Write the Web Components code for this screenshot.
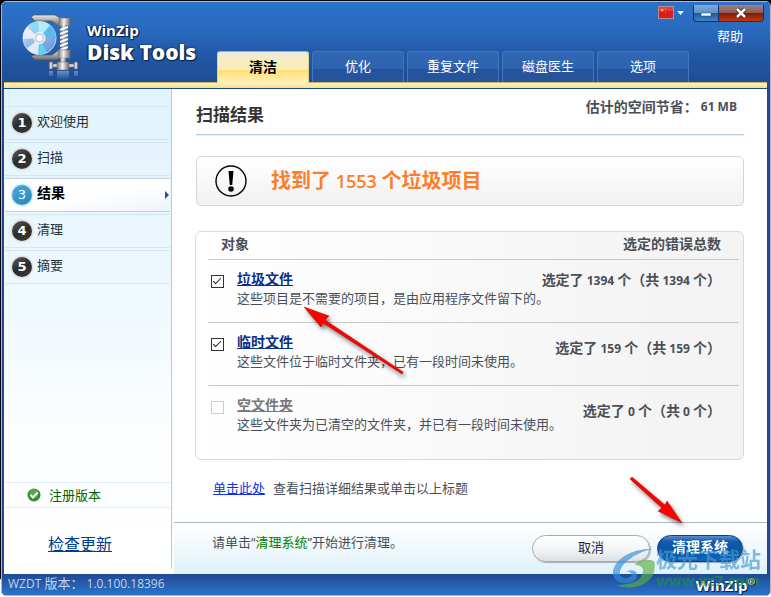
<!DOCTYPE html>
<html lang="zh-CN">
<head>
<meta charset="utf-8">
<title>WinZip Disk Tools</title>
<style>
  html { background: linear-gradient(#000 97%, #fff 97%); }
  body {
    margin: 0;
    min-height: 100vh;
    display: flex;
    overflow: hidden;
    font: 13px/18px "Open Sans", "Noto Sans CJK SC", sans-serif;
    color: #4a4f57;
    --wz-edge: #1f4a93;
    --wz-line: #d3e6f2;
  }
  wz-notice small { font-size: 18px; }
</style>
</head>
<body>

<wz-window>
  <wz-header slot="header">
    <wz-tab active>清洁</wz-tab>
    <wz-tab>优化</wz-tab>
    <wz-tab>重复文件</wz-tab>
    <wz-tab>磁盘医生</wz-tab>
    <wz-tab>选项</wz-tab>
  </wz-header>

  <wz-sidebar slot="sidebar">
    <wz-step number="1">欢迎使用</wz-step>
    <wz-step number="2">扫描</wz-step>
    <wz-step number="3" active>结果</wz-step>
    <wz-step number="4">清理</wz-step>
    <wz-step number="5">摘要</wz-step>
  </wz-sidebar>

  <wz-page>
    <span slot="title">扫描结果</span>
    <span slot="saving">估计的空间节省：</span>
    <span slot="amount">61 MB</span>
    <wz-notice>找到了<small> 1553 </small>个垃圾项目</wz-notice>
    <wz-results></wz-results>
    <wz-hint></wz-hint>
  </wz-page>

  <wz-actions slot="actions"></wz-actions>
  <wz-status slot="status" version="1.0.100.18396"></wz-status>
</wz-window>
<wz-arrows></wz-arrows>
<wz-watermark></wz-watermark>

<script>
class WzWindow extends HTMLElement {
  connectedCallback() {
    this.attachShadow({ mode: "open" });
    this.shadowRoot.innerHTML = `
      <style>
        :host {
          flex: 1;
          display: flex;
          flex-direction: column;
          margin: 1px 0 1px 1px;
          border: 1px solid #9fb9df;
          border-radius: 5px;
          overflow: hidden;
          background: var(--wz-edge);
        }
        .body {
          flex: 1;
          display: grid;
          grid-template-columns: 168px 1fr;
          margin: 0 3px 0 2px;
          background: #fff;
        }
        .content {
          display: flex;
          flex-direction: column;
          min-width: 0;
        }
        main { flex: 1; }
      </style>
      <slot name="header"></slot>
      <div class="body">
        <slot name="sidebar"></slot>
        <div class="content">
          <main><slot></slot></main>
          <slot name="actions"></slot>
        </div>
      </div>
      <slot name="status"></slot>
    `;
  }
}

class WzLogo extends HTMLElement {
  connectedCallback() {
    this.attachShadow({ mode: "open" });
    this.shadowRoot.innerHTML = `
      <style>
        :host { display: block; width: 62px; height: 70px; }
        svg { display: block; }
      </style>
      <svg width="62" height="70" viewBox="20 12 62 70" aria-hidden="true">
        <defs>
          <linearGradient id="steel" x1="0" x2="1">
            <stop offset="0" stop-color="#777"/><stop offset=".45" stop-color="#f4f4f4"/><stop offset="1" stop-color="#6d6d6d"/>
          </linearGradient>
          <linearGradient id="jaw" x1="0" x2="0" y1="0" y2="1">
            <stop offset="0" stop-color="#e9e9e9"/><stop offset=".5" stop-color="#aaa"/><stop offset="1" stop-color="#666"/>
          </linearGradient>
          <linearGradient id="disc" x1="0" x2="1" y1="0" y2="1">
            <stop offset="0" stop-color="#cfdcf6"/><stop offset=".5" stop-color="#8fb7ee"/><stop offset="1" stop-color="#5a8fd8"/>
          </linearGradient>
          <linearGradient id="fade" x1="0" x2="0" y1="0" y2="1">
            <stop offset="0" stop-color="#dbe7fa" stop-opacity=".4"/><stop offset="1" stop-color="#dbe7fa" stop-opacity="0"/>
          </linearGradient>
        </defs>
        <path d="M31 17l3-2h21l5 3h10v8H58l-6-5H35z" fill="url(#jaw)" stroke="#555" stroke-width=".7"/>
        <path d="M31 56l4 4h21l4-2h10v-8H59l-7 5H35z" fill="url(#jaw)" stroke="#555" stroke-width=".7"/>
        <rect x="59" y="18" width="11" height="8" fill="url(#steel)" stroke="#777" stroke-width=".6"/>
        <rect x="61" y="25" width="6" height="26" fill="url(#steel)"/>
        <path d="M60 30l8-3M60 34l8-3M60 38l8-3M60 42l8-3M60 46l8-3M60 50l8-3" stroke="#fafafa" stroke-width="2"/>
        <path d="M60 32l8-3M60 36l8-3M60 40l8-3M60 44l8-3M60 48l8-3" stroke="#777" stroke-width=".8"/>
        <rect x="58" y="50" width="12" height="8" fill="url(#steel)" stroke="#777" stroke-width=".6"/>
        <rect x="60" y="58" width="6" height="5" fill="url(#steel)"/>
        <rect x="52" y="64" width="23" height="3" fill="#d9d9d9" stroke="#777" stroke-width=".5"/>
        <rect x="57" y="62" width="12" height="8" rx="1" fill="url(#steel)" stroke="#666" stroke-width=".5"/>
        <rect x="49" y="62" width="4" height="7" rx="1" fill="url(#steel)" stroke="#666" stroke-width=".5"/>
        <rect x="74" y="62" width="4" height="7" rx="1" fill="url(#steel)" stroke="#666" stroke-width=".5"/>
        <path d="M49 71h4v5h-4zM57 71h12v9H57zM74 71h4v5h-4z" fill="url(#fade)"/>
        <circle cx="39.500" cy="38" r="16.500" fill="url(#disc)" stroke="#e4edfb" stroke-width=".8"/>
        <path d="M39.500 38L30 24.500A16.500 16.500 0 0 1 38 21.500z" fill="#7fe0f5"/>
        <path d="M39.500 38L38 21.500A16.500 16.500 0 0 1 50 25.500z" fill="#b7eaf8"/>
        <path d="M39.500 38L50 25.500A16.500 16.500 0 0 1 56 38z" fill="#5fb8ea"/>
        <path d="M39.500 38L47 52.500A16.500 16.500 0 0 1 38 54.500z" fill="#63d0ee"/>
        <path d="M39.500 38L38 54.500A16.500 16.500 0 0 1 27 48.500z" fill="#e3eafb"/>
        <path d="M39.500 38L23 39A16.500 16.500 0 0 1 27 27z" fill="#e9eefc"/>
        <circle cx="39.500" cy="38" r="5.500" fill="#c9d1e2" stroke="#fff" stroke-width="1"/>
        <circle cx="39.500" cy="38" r="3" fill="#fff"/>
      </svg>
    `;
  }
}

class WzHeader extends HTMLElement {
  connectedCallback() {
    this.attachShadow({ mode: "open" });
    this.shadowRoot.innerHTML = `
      <style>
        :host {
          display: grid;
          grid-template-columns: 215px 1fr;
          background: linear-gradient(#2b72c9, #2a6bc0 30%, #2157a4 62%, #1e4a92);
        }
        .brand {
          display: flex;
          gap: 5px;
          padding: 10px 0 0 18px;
          color: #fff;
          font-weight: 700;
          text-shadow: 0 0 2px #0b1f45, 1px 1px 1px #0b1f45, -1px 0 1px #0b1f45;
        }
        .name { padding-top: 8px; white-space: nowrap; }
        .name small { display: block; font-size: 15px; line-height: 20px; }
        .name strong { display: block; font-size: 21px; line-height: 24px; }
        .side { display: flex; flex-direction: column; }
        .controls {
          display: flex;
          justify-content: flex-end;
          padding: 3px 6px 0 0;
        }
        button {
          display: block;
          padding: 0;
          border: 0;
          background: none;
          height: 17px;
        }
        svg { display: block; }
        .lang {
          display: flex;
          gap: 3px;
          padding-top: 1px;
          margin-right: 9px;
        }
        .min, .close {
          border: 1px solid #16305f;
          border-top-width: 0;
          box-sizing: border-box;
        }
        .min {
          width: 26px;
          background: linear-gradient(#7fa9d8, #5f92cb 50%, #1c579f 50%, #3f83c8);
          border-radius: 0 0 0 4px;
        }
        .close {
          width: 45px;
          border-left: 0;
          background: linear-gradient(#a08083, #8c5a58 50%, #7c1d08 50%, #c0380c);
          border-radius: 0 0 4px 0;
        }
        .close svg, .min svg { margin: auto; }
        .help {
          align-self: flex-end;
          margin: 5px 27px 6px 0;
          color: #fff;
          text-decoration: none;
        }
        nav { display: flex; gap: 3px; height: 31px; }
        .gold {
          grid-column: 1 / -1;
          height: 6px;
          box-sizing: border-box;
          margin: 0 3px 1px 2px;
          border-top: 1px solid #c9b469;
          background: linear-gradient(#fff3c0, #fbdf82);
        }
      </style>
      <div class="brand">
        <wz-logo></wz-logo>
        <div class="name"><small>WinZip</small><strong>Disk Tools</strong></div>
      </div>
      <div class="side">
        <div class="controls">
          <button class="lang" aria-label="语言">
            <svg width="16" height="13" viewBox="0 0 16 13">
              <rect x=".5" y=".5" width="15" height="12" fill="#dd1a1e" stroke="#b98c92"/>
              <rect x="1" y="1" width="14" height="4" fill="#f0605a" opacity=".5"/>
              <path d="M4 2l.6 1.500h1.500L4.900 4.500l.5 1.500L4 5.100 2.600 6l.5-1.500L1.900 3.500h1.500z" fill="#ffb52e"/>
              <path d="M7 2h1v1H7zM7 6h1v1H7z" fill="#f58a3a"/>
            </svg>
            <svg width="7" height="13" viewBox="0 0 7 13"><path d="M0 5h7L3.500 9z" fill="#e6eefa"/></svg>
          </button>
          <button class="min" aria-label="最小化">
            <svg width="12" height="12" viewBox="0 0 12 12"><rect x="1" y="6" width="10" height="3" fill="#fff" stroke="#23456f" stroke-width=".5"/></svg>
          </button>
          <button class="close" aria-label="关闭">
            <svg width="12" height="12" viewBox="0 0 12 12">
              <path d="M2 2l8 8M10 2l-8 8" stroke="#3b1410" stroke-width="4"/>
              <path d="M2 2l8 8M10 2l-8 8" stroke="#fff" stroke-width="2.500"/>
            </svg>
          </button>
        </div>
        <a class="help" href="#help">帮助</a>
        <nav><slot></slot></nav>
      </div>
      <div class="gold"></div>
    `;
  }
}

class WzTab extends HTMLElement {
  connectedCallback() {
    this.attachShadow({ mode: "open" });
    this.shadowRoot.innerHTML = `
      <style>
        :host { display: block; width: 92px; height: 31px; }
        a {
          display: block;
          height: 30px;
          border: 1px solid #4277be;
          border-bottom: 0;
          border-radius: 3px 3px 0 0;
          background: linear-gradient(#3167b4, #2f62ae 58%, #25539e 58%, #28549c);
          color: #fff;
          line-height: 29px;
          text-align: center;
          text-decoration: none;
        }
        :host([active]) a {
          height: 31px;
          border-color: #e3cf94;
          border-top-color: #b9ab8f;
          background: linear-gradient(#eceae6, #f9edbd 25%, #f9edbf 57%, #ffdf70 57%, #fff0bb);
          color: #000;
          font-size: 14px;
          font-weight: 700;
          position: relative;
        }
      </style>
      <a href="#"><slot></slot></a>
    `;
  }
}

class WzSidebar extends HTMLElement {
  connectedCallback() {
    this.attachShadow({ mode: "open" });
    this.shadowRoot.innerHTML = `
      <style>
        :host {
          display: flex;
          flex-direction: column;
          padding: 17px 1px 0 1px;
          margin-bottom: 5px;
          border-right: 1px solid #b5c9d3;
          background: linear-gradient(#e1f3fc, #eef8fd 42%, #fcfeff 72%, #fff);
        }
        nav {
          flex: 1;
          display: flex;
          flex-direction: column;
          gap: 2px;
        }
        .license {
          display: flex;
          align-items: center;
          gap: 8px;
          height: 24px;
          padding-left: 22px;
          border: solid #dcebf6;
          border-width: 1px 0;
          color: #006400;
        }
        .update {
          align-self: flex-start;
          margin: 24px 0 13px 43px;
          color: #003c8f;
          font-size: 16px;
          line-height: 24px;
        }
      </style>
      <nav><slot></slot></nav>
      <div class="license">
        <svg width="14" height="14" viewBox="0 0 14 14">
          <circle cx="7" cy="7" r="6.500" fill="#2f8f2a"/>
          <circle cx="7" cy="5.500" r="4.500" fill="#6cc05f" opacity=".6"/>
          <path d="M3.500 7l2.500 2.500 4.500-5" fill="none" stroke="#fff" stroke-width="2.200"/>
        </svg>
        注册版本
      </div>
      <a class="update" href="#update">检查更新</a>
    `;
  }
}

class WzStep extends HTMLElement {
  connectedCallback() {
    this.attachShadow({ mode: "open" });
    this.shadowRoot.innerHTML = `
      <style>
        :host {
          display: flex;
          align-items: center;
          gap: 5px;
          height: 32px;
          padding: 0 1px 0 7px;
          border: solid var(--wz-line);
          border-width: 1px 0;
          color: #1d3038;
        }
        .number {
          width: 20px;
          height: 20px;
          border-radius: 50%;
          background: linear-gradient(150deg, #5a5a5a, #2c2c2c 50%, #3a3a3a);
          box-shadow: 0 0 2px 1px #d9d3cf;
          color: #fff;
          font: 700 13px/20px "DejaVu Sans", sans-serif;
          text-align: center;
        }
        .label { flex: 1; padding-bottom: 4px; }
        .arrow { display: none; }
        :host([active]) {
          border-color: #c3cfdc;
          background: linear-gradient(170deg, #fff 50%, #edf4fb);
          color: #000;
          font-size: 14px;
          font-weight: 700;
        }
        :host([active]) .number {
          background: linear-gradient(150deg, #4fa9d6, #1f87bd);
          box-shadow: 0 0 2px 1px #a9e0f8;
          font-weight: 400;
        }
        :host([active]) .arrow { display: block; }
      </style>
      <span class="number">${this.getAttribute("number")}</span>
      <span class="label"><slot></slot></span>
      <svg class="arrow" width="4" height="8" viewBox="0 0 4 8"><path d="M0 0l4 4-4 4z" fill="#2c4f94"/></svg>
    `;
  }
}

class WzPage extends HTMLElement {
  connectedCallback() {
    this.attachShadow({ mode: "open" });
    this.shadowRoot.innerHTML = `
      <style>
        :host { display: block; padding: 0 23px 0 24px; }
        header {
          display: flex;
          align-items: flex-start;
          height: 45px;
          margin-bottom: 21px;
          border-bottom: 1px solid #b5cadc;
          box-shadow: 0 1px 1px #e4eff8;
        }
        h1 {
          flex: 1;
          margin: 0;
          padding-top: 15px;
          color: #333;
          font-size: 17px;
          font-weight: 700;
          line-height: 22px;
        }
        .saving {
          display: flex;
          gap: 3px;
          padding: 7px 7px 0 0;
          font-size: 14px;
          font-weight: 700;
          line-height: 22px;
        }
        .saving slot[name="amount"] { font-size: 12px; }
      </style>
      <header>
        <h1><slot name="title"></slot></h1>
        <div class="saving"><slot name="saving"></slot><slot name="amount"></slot></div>
      </header>
      <slot></slot>
    `;
  }
}

class WzNotice extends HTMLElement {
  connectedCallback() {
    this.attachShadow({ mode: "open" });
    this.shadowRoot.innerHTML = `
      <style>
        :host {
          display: flex;
          align-items: center;
          gap: 24px;
          height: 48px;
          padding-left: 18px;
          border: 1px solid #d5d5d5;
          border-radius: 5px;
          background: linear-gradient(#fff, #f1f1f1);
          color: #ff7d26;
          font-size: 20px;
          font-weight: 600;
          line-height: 28px;
        }
      </style>
      <svg width="32" height="32" viewBox="0 0 32 32">
        <circle cx="16" cy="16" r="15" fill="none" stroke="#000" stroke-width="1.400"/>
        <path d="M13.500 6h5l-1.300 14h-2.400z"/>
        <circle cx="16" cy="24" r="2.800"/>
      </svg>
      <span><slot></slot></span>
    `;
  }
}

const results = [
  { id: "junk", name: "垃圾文件", text: "这些项目是不需要的项目，是由应用程序文件留下的。", count: 1394, checked: true },
  { id: "temp", name: "临时文件", text: "这些文件位于临时文件夹，已有一段时间未使用。", count: 159, checked: true },
  { id: "empty", name: "空文件夹", text: "这些文件夹为已清空的文件夹，并已有一段时间未使用。", count: 0, checked: false },
];

class WzResults extends HTMLElement {
  connectedCallback() {
    this.attachShadow({ mode: "open" });
    this.shadowRoot.innerHTML = `
      <style>
        :host {
          display: block;
          margin: 25px 0 17px -1px;
          padding: 0 4px 11px 12px;
          border: 1px solid #d9d9d9;
          border-radius: 6px;
          background: linear-gradient(90deg, #fff, #f4f4f4 85%);
        }
        table {
          width: 100%;
          border-collapse: collapse;
          table-layout: fixed;
        }
        th, td { box-sizing: border-box; padding: 0; vertical-align: top; text-align: left; }
        tbody tr { border-top: 1px solid #c8c8c8; }
        th {
          height: 27px;
          font-size: 14px;
          font-weight: 700;
          line-height: 24px;
        }
        th:first-child { padding-left: 13px; }
        .total { text-align: right; padding-right: 18px; }
        td { height: 63px; white-space: nowrap; }
        .pick { width: 29px; }
        input {
          appearance: none;
          box-sizing: border-box;
          display: block;
          width: 13px;
          height: 13px;
          margin: 15px 0 0 3px;
          border: 1px solid #333;
          background: #fff;
        }
        input::before {
          content: "";
          display: block;
          width: 7px;
          height: 3px;
          margin: 2px 0 0 1px;
        }
        input:checked::before {
          border: solid #222;
          border-width: 0 0 1px 1px;
          transform: rotate(-45deg);
        }
        input:disabled { border-color: #ccc; }
        label { display: block; padding-top: 9px; line-height: 20px; font-size: 14px; font-weight: 700; }
        label a { color: #0b3088; }
        .off a { color: #76787c; }
        p { margin: 0; line-height: 18px; }
        td.total { padding-top: 14px; font-size: 14px; font-weight: 700; line-height: 22px; }
        .wide td.total { padding-top: 9px; }
        .total span { font-size: 12px; }
      </style>
      <table>
        <colgroup><col class="pick"><col><col width="200"></colgroup>
        <thead>
          <tr><th colspan="2">对象</th><th class="total">选定的错误总数</th></tr>
        </thead>
        <tbody>
          ${results.map((r) => `
            <tr class="${r.count > 999 ? "wide" : ""} ${r.checked ? "" : "off"}">
              <td><input type="checkbox" id="${r.id}" ${r.checked ? "checked" : "disabled"}></td>
              <td><label for="${r.id}"><a href="#${r.id}">${r.name}</a></label><p>${r.text}</p></td>
              <td class="total">选定了<span> ${r.count} </span>个（共<span> ${r.count} </span>个）</td>
            </tr>`).join("")}
        </tbody>
      </table>
    `;
  }
}

class WzHint extends HTMLElement {
  connectedCallback() {
    this.attachShadow({ mode: "open" });
    this.shadowRoot.innerHTML = `
      <style>
        :host { display: flex; gap: 8px; padding-left: 17px; line-height: 22px; }
        a { color: #1030e8; }
      </style>
      <a href="#details">单击此处</a><span>查看扫描详细结果或单击以上标题</span>
    `;
  }
}

class WzActions extends HTMLElement {
  connectedCallback() {
    this.attachShadow({ mode: "open" });
    this.shadowRoot.innerHTML = `
      <style>
        :host {
          display: flex;
          gap: 7px;
          height: 51px;
          margin-left: 2px;
          border-top: 1px solid #adb9c0;
          background: linear-gradient(#fff, #dff1fa);
        }
        p { flex: 1; margin: 0; padding: 10px 0 0 38px; }
        b { color: #008000; font-weight: 400; }
        button {
          width: 118px;
          height: 27px;
          margin: 12px 0 0;
          padding: 0 0 3px;
          border: 1px solid #a8abb0;
          border-radius: 14px;
          background: linear-gradient(#fff, #f4f5f6 55%, #dcdfe2);
          box-shadow: 1px 1px 1px #a5adb3;
          color: #1d1d3a;
          font: inherit;
        }
        .primary {
          width: 86px;
          margin-right: 24px;
          border-color: #0a3f80;
          background: linear-gradient(#5a90cf, #1159ab 22%, #0a56a9 60%, #0f65bd);
          color: #fff;
          font-size: 14px;
          font-weight: 700;
        }
      </style>
      <p>请单击“<b>清理系统</b>”开始进行清理。</p>
      <button>取消</button>
      <button class="primary">清理系统</button>
    `;
  }
}

class WzStatus extends HTMLElement {
  connectedCallback() {
    this.attachShadow({ mode: "open" });
    this.shadowRoot.innerHTML = `
      <style>
        :host {
          display: flex;
          justify-content: space-between;
          height: 21px;
          padding: 0 15px 0 6px;
          background: linear-gradient(#1f4a93, #2c73ca);
          color: #c3d3ea;
          line-height: 19px;
        }
        small { font-size: 12px; }
        strong {
          color: #fff;
          font-size: 15px;
          line-height: 22px;
          text-shadow: 0 0 2px #0b1f45, 1px 1px 1px #0b1f45;
        }
        sup { font-size: 9px; line-height: 0; }
      </style>
      <span><small>WZDT </small>版本：<small> ${this.getAttribute("version")}</small></span>
      <strong>WinZip<sup>®</sup></strong>
    `;
  }
}

class WzArrows extends HTMLElement {
  connectedCallback() {
    this.attachShadow({ mode: "open" });
    this.shadowRoot.innerHTML = `
      <style>
        :host { position: absolute; left: 0; top: 0; pointer-events: none; }
        svg { display: block; filter: drop-shadow(2px 3px 2px rgba(0, 0, 0, .5)); }
      </style>
      <svg width="771" height="597" viewBox="0 0 771 597" fill="#f00" stroke="#a01010" stroke-width=".5">
        <path d="M304 307L329 316 325 320 403 372 402 374 323 323 321 327z"/>
        <path d="M682 523L658 511 662 508 630 479 632 477 665 505 667 501z"/>
      </svg>
    `;
  }
}

class WzWatermark extends HTMLElement {
  connectedCallback() {
    this.attachShadow({ mode: "open" });
    this.shadowRoot.innerHTML = `
      <style>
        :host {
          position: absolute;
          right: 10px;
          bottom: 8px;
          display: flex;
          opacity: .65;
          pointer-events: none;
        }
        .text { color: #4a9bd0; font-size: 21px; font-weight: 700; line-height: 24px; }
        .url { display: block; color: #1f9440; font-size: 15px; font-weight: 700; line-height: 18px; }
      </style>
      <svg width="43" height="42" viewBox="0 0 43 42">
        <path d="M39 2C22 1 3 10 0 24c-1 8 5 12 13 12 7 0 12-4 11-9-1-4-6-5-11-2 4-1 6 1 5 4-2 3-9 3-11-1C5 20 18 7 39 2z" fill="#2f8fd8"/>
        <path d="M41 14c-8-3-17 0-19 4 8 0 10 5 6 12-4 6-14 8-25 8 14 6 34 1 38-13 1-5 1-9 0-11z" fill="#58b040"/>
      </svg>
      <div class="text">极光下载站<span class="url">www.xz7.com</span></div>
    `;
  }
}

customElements.define("wz-window", WzWindow);
customElements.define("wz-logo", WzLogo);
customElements.define("wz-header", WzHeader);
customElements.define("wz-tab", WzTab);
customElements.define("wz-sidebar", WzSidebar);
customElements.define("wz-step", WzStep);
customElements.define("wz-page", WzPage);
customElements.define("wz-notice", WzNotice);
customElements.define("wz-results", WzResults);
customElements.define("wz-hint", WzHint);
customElements.define("wz-actions", WzActions);
customElements.define("wz-status", WzStatus);
customElements.define("wz-arrows", WzArrows);
customElements.define("wz-watermark", WzWatermark);
</script>
</body>
</html>
